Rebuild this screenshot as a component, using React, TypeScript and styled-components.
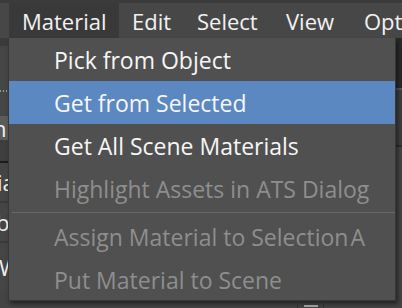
import React from "react";
import styled, { createGlobalStyle } from "styled-components";

const Global = createGlobalStyle`
  html, body { margin: 0; padding: 0; background: #444444; }
  body { font-family: "Open Sans", "Liberation Sans", sans-serif; }
`;

const Screen = styled.div`
  position: relative;
  width: 402px;
  height: 308px;
  overflow: hidden;
  background: #444444;
  display: flex;
  flex-direction: column;
`;

const MenuBar = styled.div`
  height: 35px;
  border-top: 3px solid #3b3b3b;
  background: #474747;
  display: flex;
  align-items: stretch;
  padding-left: 9px;
  flex-shrink: 0;
`;

const MenuTitle = styled.div<{ $open?: boolean; $w: number }>`
  width: ${(p) => p.$w}px;
  flex-shrink: 0;
  display: flex;
  align-items: center;
  padding-left: 13px;
  box-sizing: border-box;
  font-size: 22px;
  color: #f2f2f2;
  background: ${(p) => (p.$open ? "#393939" : "transparent")};
  white-space: nowrap;
`;

const Body = styled.div`
  flex: 1;
  display: flex;
  justify-content: space-between;
`;

const LeftStrip = styled.div`
  width: 9px;
  display: flex;
  flex-direction: column;
  overflow: hidden;
`;

const StripBlock = styled.div<{ $h: number; $bg: string; $line?: string }>`
  height: ${(p) => p.$h}px;
  background: ${(p) => p.$bg};
  border-bottom: ${(p) => (p.$line ? `2px solid ${p.$line}` : "none")};
  flex-shrink: 0;
  display: flex;
  align-items: center;
  font-size: 22px;
  color: #f0f0f0;
  white-space: nowrap;
  overflow: hidden;
`;

const Dots = styled.div`
  margin-top: 20px;
  height: 2px;
  width: 9px;
  background-image: linear-gradient(to right, #9a9a9a 50%, transparent 50%);
  background-size: 3px 2px;
`;

const RightStrip = styled.div`
  width: 6px;
  display: flex;
  flex-direction: column;
`;

const Popup = styled.div`
  position: absolute;
  left: 8px;
  top: 38px;
  width: 388px;
  height: 263px;
  box-sizing: border-box;
  background: #505050;
  border: 1px solid #383838;
  border-top: none;
  box-shadow: 2px 3px 4px rgba(0, 0, 0, 0.45);
  display: flex;
  flex-direction: column;
`;

const Item = styled.div<{ $active?: boolean; $disabled?: boolean }>`
  height: 43px;
  flex-shrink: 0;
  display: flex;
  align-items: center;
  padding-left: 45px;
  font-size: 23px;
  white-space: nowrap;
  color: ${(p) => (p.$disabled ? "#8e8e8e" : "#f6f6f6")};
  background: ${(p) => (p.$active ? "#5b88c1" : "transparent")};
`;

const Label = styled.span``;

const Tight = styled.span`
  word-spacing: -4px;
`;

const Separator = styled.div`
  height: 5px;
  flex-shrink: 0;
  display: flex;
  align-items: center;
  padding-left: 3px;
  &::after {
    content: "";
    flex: 1;
    height: 1px;
    background: #686868;
  }
`;

const Handle = styled.div`
  position: absolute;
  left: 297px;
  top: 301px;
  width: 27px;
  height: 7px;
  box-sizing: border-box;
  border-left: 1px solid #2e2e2e;
  border-right: 1px solid #2e2e2e;
  display: flex;
  justify-content: center;
  &::after {
    content: "";
    width: 14px;
    height: 2px;
    margin-top: 4px;
    background: #9a9a9a;
  }
`;

const menus = [
  { label: "Material", w: 110, open: true },
  { label: "Edit", w: 65 },
  { label: "Select", w: 89 },
  { label: "View", w: 78 },
  { label: "Options", w: 100 },
];

const items: Array<{ label: string; active?: boolean; disabled?: boolean; sep?: boolean; tail?: string }> = [
  { label: "Pick from Object" },
  { label: "Get from Selected", active: true },
  { label: "Get All Scene Materials" },
  { label: "Highlight Assets in ATS Dialog", disabled: true },
  { label: "", sep: true },
  { label: "Assign Material to ", tail: "Selection A", disabled: true },
  { label: "Put Material to Scene", disabled: true },
];

export default function App() {
  return (
    <>
      <Global />
      <Screen>
        <MenuBar>
          {menus.map((m) => (
            <MenuTitle key={m.label} $open={m.open} $w={m.w}>
              {m.label}
            </MenuTitle>
          ))}
        </MenuBar>
        <Body>
          <LeftStrip>
            <StripBlock $h={8} $bg="#3b3b3b" />
            <StripBlock $h={70} $bg="#454545">
              <Dots />
            </StripBlock>
            <StripBlock $h={24} $bg="#5b5b5b">
              <span style={{ marginLeft: -7 }}>n</span>
            </StripBlock>
            <StripBlock $h={21} $bg="#3e3e3e" $line="#1c1c1c" />
            <StripBlock $h={38} $bg="#454545" $line="#3a3a3a">
              <span style={{ marginLeft: -3 }}>ia</span>
            </StripBlock>
            <StripBlock $h={38} $bg="#454545" $line="#3a3a3a">
              <span style={{ marginLeft: -4 }}>bl</span>
            </StripBlock>
            <StripBlock $h={48} $bg="#454545">
              <span style={{ marginLeft: -1 }}>W</span>
            </StripBlock>
          </LeftStrip>
          <RightStrip>
            <StripBlock $h={50} $bg="#2a2a2a" $line="#555555" />
            <StripBlock $h={55} $bg="#3e3e3e" $line="#2e2e2e" />
            <StripBlock $h={160} $bg="#444444" />
          </RightStrip>
        </Body>
        <Popup>
          {items.map((it, i) =>
            it.sep ? (
              <Separator key={i} />
            ) : (
              <Item key={i} $active={it.active} $disabled={it.disabled}>
                <Label>
                  {it.label}
                  {it.tail && <Tight>{it.tail}</Tight>}
                </Label>
              </Item>
            )
          )}
        </Popup>
        <Handle />
      </Screen>
    </>
  );
}
